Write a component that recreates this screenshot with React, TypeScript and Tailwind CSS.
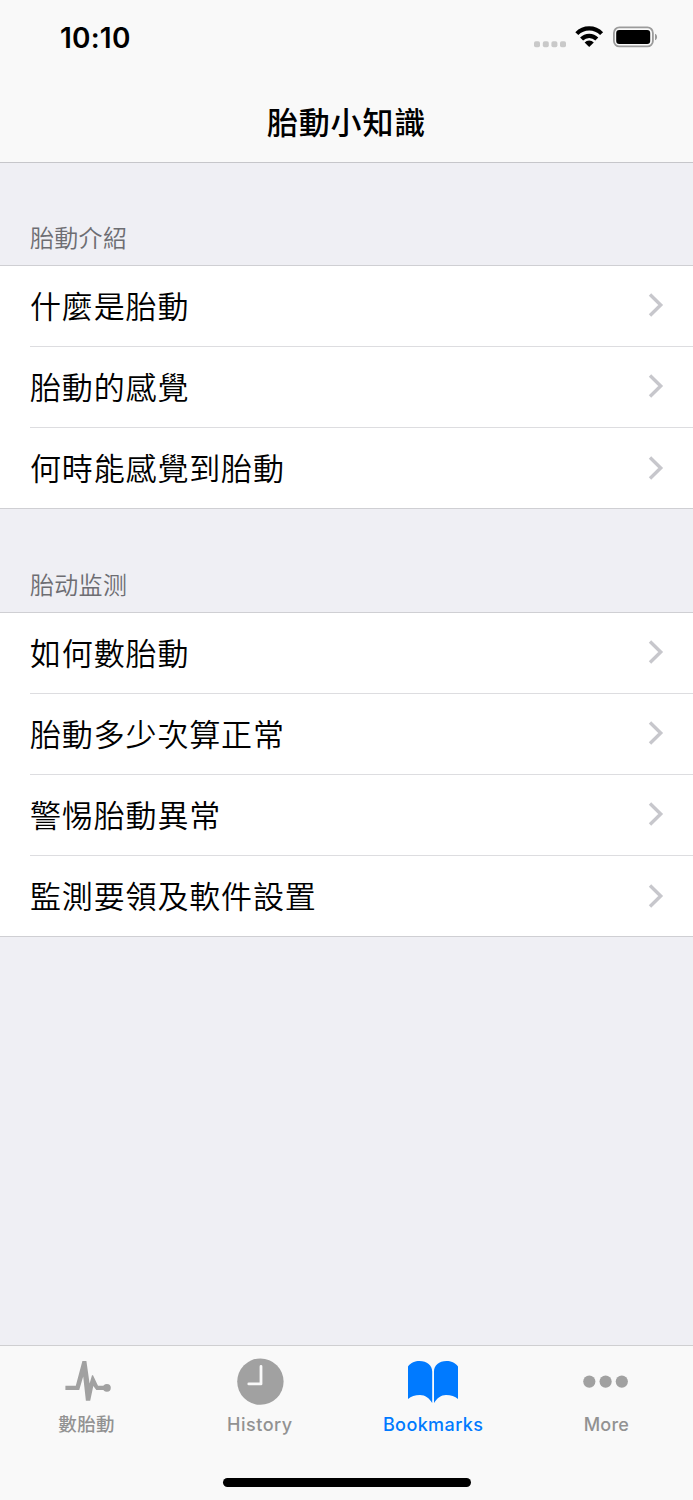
const sections = [
  {
    title: '胎動介紹',
    headerClass: 'h-[102px]',
    items: ['什麼是胎動', '胎動的感覺', '何時能感覺到胎動'],
  },
  {
    title: '胎动监测',
    headerClass: 'h-[103px]',
    items: ['如何數胎動', '胎動多少次算正常', '警惕胎動異常', '監測要領及軟件設置'],
  },
]

const PulseIcon = () => (
  <svg width="50" height="50" viewBox="0 0 50 50" fill="currentColor">
    <path d="M3.4 28.8H13.8L20.4 4H24.4L27.6 26.5L30 18.2H31L36 28.8H44V33H34.3L31.3 29L28.2 43.8H23.9L21.2 19.5L17.2 33H3.4z" />
    <circle cx="44.9" cy="30.8" r="3.9" />
  </svg>
)

const HistoryIcon = () => (
  <svg width="50" height="50" viewBox="0 0 50 50" fill="none">
    <circle cx="25.4" cy="24.6" r="23.2" fill="currentColor" />
    <path d="M26 9.5v17.4H13.8" stroke="#f9f9f9" strokeWidth="2.8" strokeLinecap="round" strokeLinejoin="round" />
  </svg>
)

const BookIcon = () => (
  <svg width="54" height="50" viewBox="0 0 54 50" fill="currentColor">
    <path d="M2 9.5C5 5.5 9 4 13.5 4C21 4 26.2 8.5 26.2 14.5V46c-3-5-7-8-12.2-8-5 0-9 1.3-12 4z" />
    <path d="M52 9.5C49 5.5 45 4 40.5 4C33 4 28 8.5 28 14.5V46c3-5 7-8 12-8 5 0 9 1.3 12 4z" />
  </svg>
)

const MoreIcon = () => (
  <svg width="50" height="50" viewBox="0 0 50 50" fill="currentColor">
    <circle cx="8.3" cy="24.6" r="6.1" />
    <circle cx="24.6" cy="24.6" r="6.1" />
    <circle cx="40.8" cy="24.6" r="6.1" />
  </svg>
)

const tabs = [
  { label: '數胎動', icon: PulseIcon, active: false, labelClass: 'pt-[5px] text-[18.5px] tracking-[0.4px]' },
  { label: 'History', icon: HistoryIcon, active: false, labelClass: 'pt-1.5 text-[18px] tracking-[0.5px]' },
  { label: 'Bookmarks', icon: BookIcon, active: true, labelClass: 'pt-1.5 text-[18px] tracking-[0.4px]' },
  { label: 'More', icon: MoreIcon, active: false, labelClass: 'pt-1.5 text-[18px] tracking-[0.2px]' },
]

const StatusBar = () => (
  <div className="flex h-[74px] items-center justify-between pr-[35px] pl-[60px]">
    <span className="pt-0.5 text-[28px] font-semibold tracking-[0.2px]">10:10</span>
    <svg width="124" height="30" viewBox="0 0 124 30" fill="none">
      <g fill="#c9c9c9">
        <rect x="0" y="19.2" width="6" height="6" rx="1.8" />
        <rect x="8.8" y="19.2" width="6" height="6" rx="1.8" />
        <rect x="17.4" y="19.2" width="6" height="6" rx="1.8" />
        <rect x="26" y="19.2" width="6" height="6" rx="1.8" />
      </g>
      <g stroke="#000" strokeWidth="4.2">
        <path d="M42.8 11.6a17.4 17.4 0 0 1 24.8 0" />
        <path d="M47.6 17a10.6 10.6 0 0 1 15.2 0" />
      </g>
      <path d="M50.6 20.4a6.6 6.6 0 0 1 9.2 0l-4.6 4.6z" fill="#000" />
      <rect x="79.9" y="5.4" width="39" height="19" rx="5.5" stroke="#9b9b9b" strokeWidth="1.8" />
      <rect x="82.2" y="7.9" width="34" height="14" rx="3" fill="#000" />
      <path d="M121 11.7c2.8 1 2.8 5.6 0 6.6z" fill="#9b9b9b" />
    </svg>
  </div>
)

const Row = ({ label, last }: { label: string; last: boolean }) => (
  <div className={last ? 'h-20 pl-[30px]' : 'h-[81px] pl-[30px]'}>
    <div className={`flex h-full items-center justify-between pr-[29px] ${last ? 'pt-px' : 'border-b border-[#dddde0]'}`}>
      <span className="pt-px text-[31px] leading-[40px] font-[350] tracking-[0.85px]">{label}</span>
      <svg width="16" height="26" viewBox="0 0 16 26" fill="none" className="-mt-0.5">
        <path d="M2 2.5L12.7 13 2 23.5" stroke="#c7c7cc" strokeWidth="3.4" />
      </svg>
    </div>
  </div>
)

export default function App() {
  return (
    <div className="flex h-[1500px] w-[693px] flex-col bg-[#efeff4] font-[Inter,'Noto_Sans_CJK_TC',sans-serif] text-black">
      <header className="h-[163px] border-b border-[#c6c6ca] bg-[#f9f9f9]">
        <StatusBar />
        <h1 className="pt-[26px] text-center text-[31px] leading-[46px] font-medium tracking-[0.8px]">胎動小知識</h1>
      </header>

      <main className="flex-1">
        {sections.map(({ title, headerClass, items }) => (
          <section key={title}>
            <h2 className={`flex items-end pb-2 pl-[30px] text-[24px] leading-[36px] font-[350] tracking-[0.3px] text-[#6d6d72] ${headerClass}`}>
              {title}
            </h2>
            <div className="border-y border-[#cfcfd3] bg-white">
              {items.map((item, index) => (
                <Row key={item} label={item} last={index === items.length - 1} />
              ))}
            </div>
          </section>
        ))}
      </main>

      <footer className="flex h-[155px] flex-col border-t border-[#cfcfd1] bg-[#f9f9f9]">
        <nav className="grid grid-cols-4 pt-[11px]">
          {tabs.map(({ label, icon: Icon, active, labelClass }) => (
            <a key={label} href="#" className="flex flex-col items-center">
              <span className={active ? 'text-[#007aff]' : 'text-[#a1a1a1]'}>
                <Icon />
              </span>
              <span className={`leading-6 font-medium ${labelClass} ${active ? 'text-[#007aff]' : 'text-[#929292]'}`}>
                {label}
              </span>
            </a>
          ))}
        </nav>
        <div className="mx-auto mt-auto mb-[13px] h-[9px] w-[248px] rounded-full bg-black" />
      </footer>
    </div>
  )
}
